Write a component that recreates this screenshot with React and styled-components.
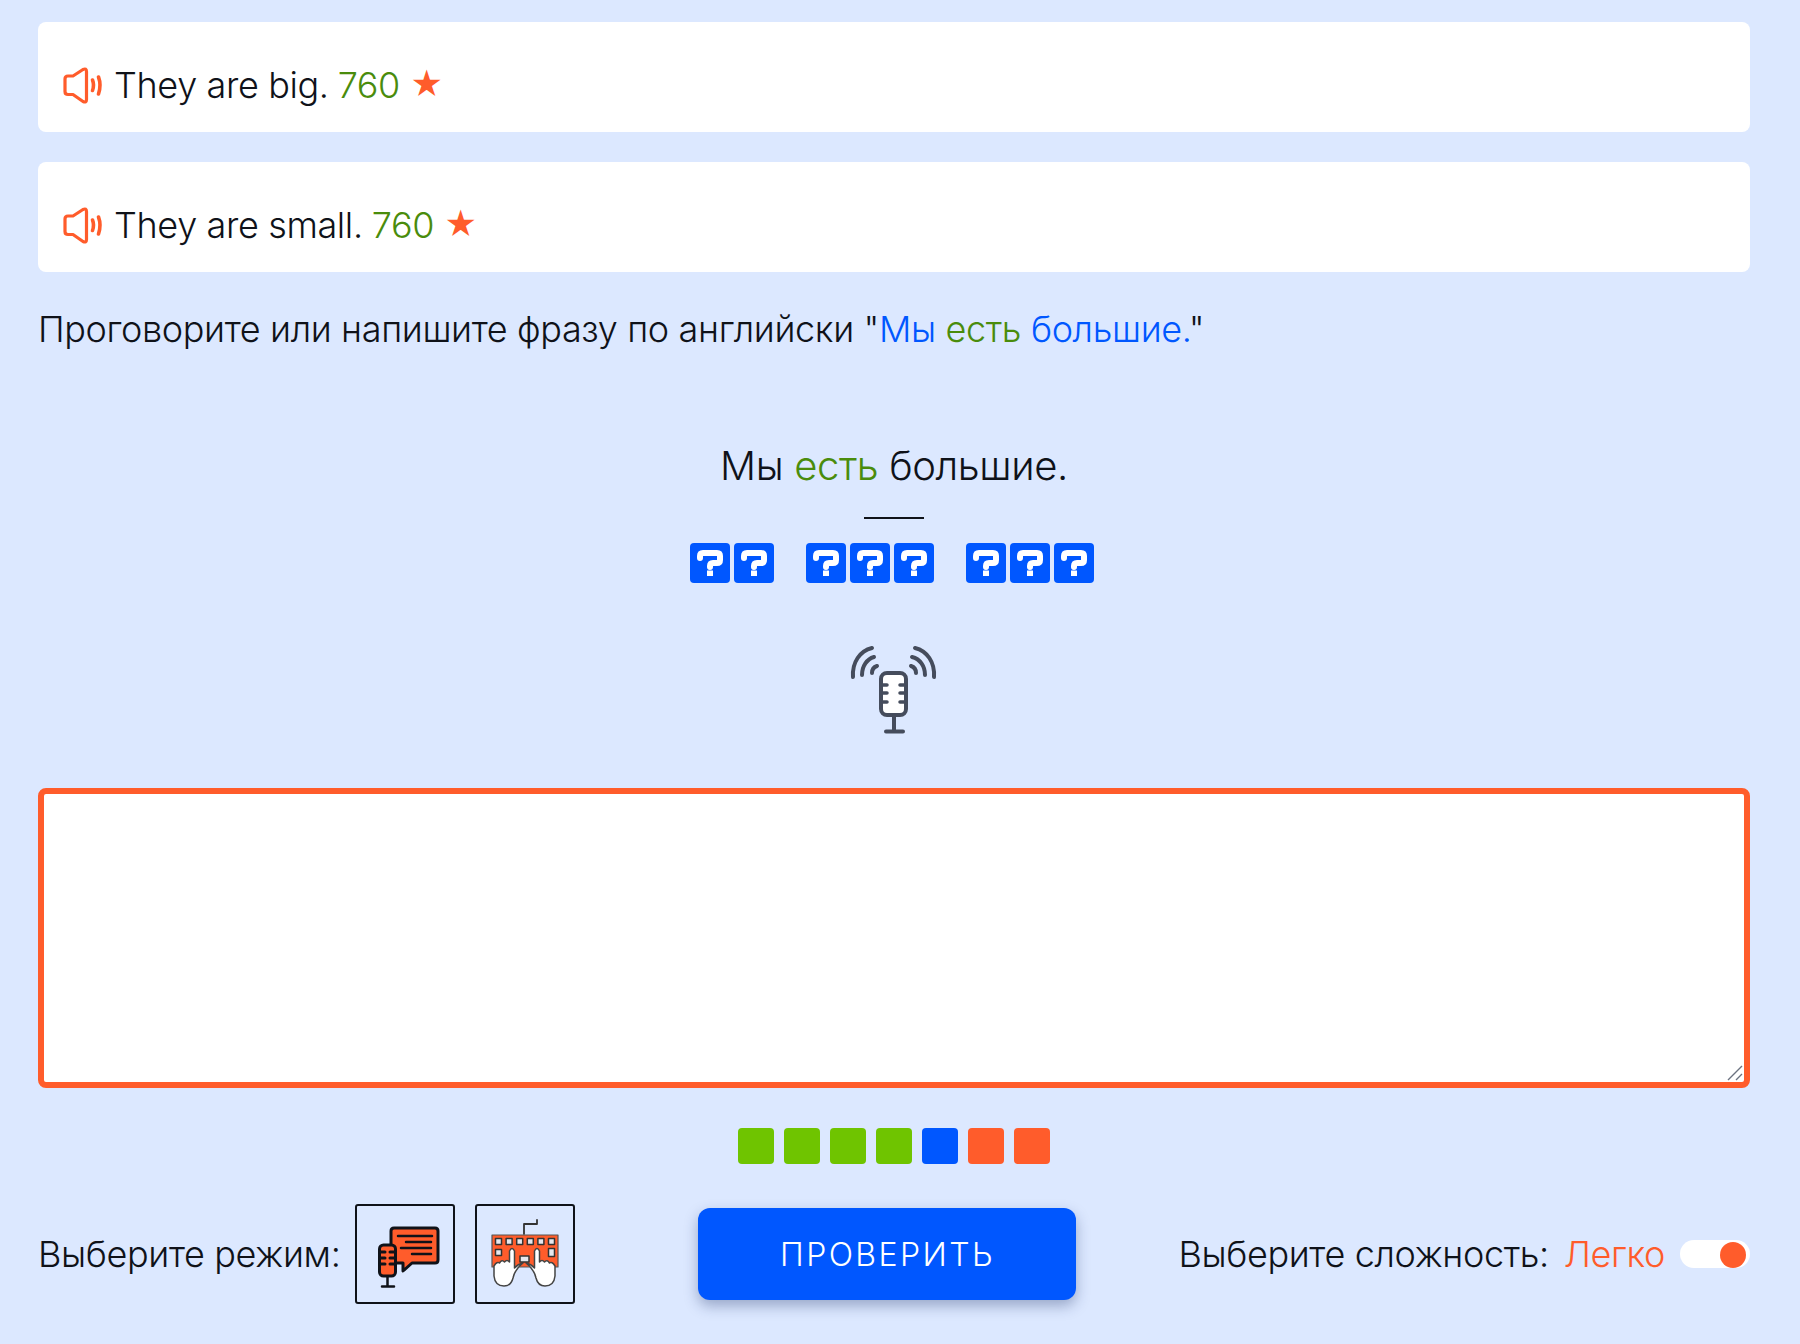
import React from 'react'
import styled, { createGlobalStyle } from 'styled-components'

const ORANGE = '#ff5c2b'
const BLUE = '#0057ff'
const GREEN = '#4a8c0c'
const LIME = '#6fc400'
const DARK = '#0f1219'

const GlobalStyle = createGlobalStyle`
  html, body {
    margin: 0;
    padding: 0;
    background: #dce8ff;
  }
  body {
    font-family: Inter, "Noto Sans", sans-serif;
    font-weight: 350;
    letter-spacing: -0.37px;
    color: ${DARK};
  }
`

const Page = styled.div`
  box-sizing: border-box;
  width: 1800px;
  height: 1344px;
  padding: 22px 50px 0 38px;
  overflow: hidden;
`

const Card = styled.div`
  box-sizing: border-box;
  height: 110px;
  margin-bottom: 30px;
  padding: 42px 0 0 25px;
  background: #fff;
  border-radius: 8px;
  display: flex;
  align-items: flex-start;
  font-size: 36px;
  line-height: 42px;
`

const SpeakerIcon = styled.svg`
  width: 42px;
  height: 44px;
  margin-right: 9px;
  flex: none;
`

const Score = styled.span`
  color: ${GREEN};
  margin-left: 9px;
`

const Star = styled.span`
  color: ${ORANGE};
  margin-left: 10px;
  font-size: 32px;
`

const Instruction = styled.div`
  padding-top: 5px;
  font-size: 36px;
  line-height: 44px;
`

const Blue = styled.span`
  color: ${BLUE};
`

const Green = styled.span`
  color: ${GREEN};
`

const Center = styled.div`
  display: flex;
  flex-direction: column;
  align-items: center;
`

const Phrase = styled.div`
  margin-top: 91px;
  font-size: 40px;
  line-height: 48px;
`

const Divider = styled.div`
  width: 60px;
  height: 2px;
  margin-top: 27px;
  background: ${DARK};
`

const Words = styled.div`
  display: flex;
  gap: 32px;
  margin: 24px 0 0 -4px;
`

const Word = styled.div`
  display: flex;
  gap: 4px;
`

const Letter = styled.svg`
  width: 40px;
  height: 40px;
  display: block;
`

const MicIcon = styled.svg`
  width: 90px;
  height: 90px;
  margin-top: 62px;
  display: block;
`

const AnswerBox = styled.div`
  position: relative;
  margin-top: 53px;
`

const Answer = styled.textarea`
  display: block;
  box-sizing: border-box;
  width: 100%;
  height: 300px;
  border: 6px solid ${ORANGE};
  border-radius: 8px;
  background: #fff;
  outline: none;
  resize: none;
`

const Grip = styled.svg`
  position: absolute;
  right: 7px;
  bottom: 7px;
  width: 16px;
  height: 16px;
`

const Progress = styled.div`
  display: flex;
  justify-content: center;
  gap: 10px;
  margin-top: 40px;
`

const Step = styled.div`
  width: 36px;
  height: 36px;
  border-radius: 4px;
  background: ${(p) => p.color};
`

const Footer = styled.div`
  display: flex;
  align-items: center;
  margin-top: 40px;
  height: 100px;
  font-size: 36px;
`

const ModeLabel = styled.span`
  margin-right: 15px;
`

const ModeButton = styled.div`
  box-sizing: border-box;
  width: 100px;
  height: 100px;
  margin-right: 20px;
  border: 2px solid ${DARK};
  border-radius: 3px;
  display: flex;
  align-items: center;
  justify-content: center;
`

const ModeIcon = styled.svg`
  width: 96px;
  height: 96px;
`

const CheckButton = styled.button`
  width: 378px;
  height: 92px;
  margin-left: 103px;
  border: none;
  border-radius: 12px;
  background: ${BLUE};
  color: #fff;
  font-family: inherit;
  font-size: 32px;
  font-weight: 350;
  letter-spacing: 2.4px;
  box-shadow: 0 6px 14px rgba(30, 50, 100, 0.35);
`

const Difficulty = styled.div`
  margin-left: auto;
  display: flex;
  align-items: center;
`

const Level = styled.span`
  color: ${ORANGE};
  margin-left: 15px;
`

const Toggle = styled.div`
  width: 70px;
  height: 28px;
  margin-left: 15px;
  padding: 2px 4px 0 0;
  box-sizing: border-box;
  border-radius: 14px;
  background: #fff;
  display: flex;
  justify-content: flex-end;
`

const Knob = styled.div`
  width: 26px;
  height: 26px;
  border-radius: 50%;
  background: ${ORANGE};
`

const Speaker = () => (
  <SpeakerIcon viewBox="0 0 42 44" fill="none" stroke={ORANGE} strokeLinecap="round" strokeLinejoin="round" strokeWidth="3.2">
    <path d="M2 15 Q2 12 5 12 H10 L20 5.5 Q23.5 4 23.5 7.5 V35.5 Q23.5 39 20 37.5 L10 30.5 H5 Q2 30.5 2 27.5 Z" />
    <path strokeWidth="3.6" d="M29.5 16 Q31.5 21 29.5 26.5" />
    <path strokeWidth="3.6" d="M35.5 13 Q38.5 21 35.5 30" />
  </SpeakerIcon>
)

const Question = () => (
  <Letter viewBox="0 0 40 40">
    <rect width="40" height="40" rx="4" fill={BLUE} />
    <path
      d="M10 15 V13 Q10 10 13 10 H27 Q30 10 30 13 V17 Q30 20 27 20 H23 Q20 20 20 23 V24"
      fill="none"
      stroke="#fff"
      strokeWidth="6"
      strokeLinecap="round"
      strokeLinejoin="round"
    />
    <rect x="17" y="27.5" width="6" height="5.5" fill="#fff" />
  </Letter>
)

const Mic = () => (
  <MicIcon viewBox="0 0 90 90" fill="none" stroke="#454c5c" strokeLinecap="round" strokeLinejoin="round" strokeWidth="4">
    <rect x="32" y="28" width="25" height="42" rx="6" fill="#fff" />
    <path strokeWidth="3.5" d="M34 40 H38 M34 48 H38 M34 57 H38 M51 40 H55 M51 48 H55 M51 57 H55" />
    <path d="M45 71 V86 M37 86.5 H54" />
    <path d="M4 32 C3 17 11 6 23 3" />
    <path d="M13 30 C13 21 18 14 25 12" />
    <path d="M23 28 C23 25 25 22 28 21" />
    <path d="M85 32 C86 17 78 6 66 3" />
    <path d="M76 30 C76 21 71 14 63 12" />
    <path d="M67 28 C67 25 65 22 62 21" />
  </MicIcon>
)

const SpeechMode = () => (
  <ModeIcon viewBox="0 0 96 96" fill="none" stroke={DARK} strokeLinejoin="round" strokeLinecap="round">
    <path strokeWidth="3" fill={ORANGE} d="M34 25 Q34 22 37 22 H78 Q81 22 81 25 V54 Q81 57 78 57 H55 L46 65 V57 H34 Z" />
    <path strokeWidth="2.5" d="M41 30 H75 M49 36 H74 M44 42 H74 M55 48 H74" />
    <rect x="22.5" y="39" width="16" height="31" rx="4" strokeWidth="3" fill={ORANGE} />
    <path strokeWidth="3" d="M23 46 H28 M23 52 H28 M23 58 H28 M33 46 H38 M33 52 H38 M33 58 H38" />
    <path strokeWidth="2.5" d="M30.5 71 V80 M25 80.5 H37" />
  </ModeIcon>
)

const keys = [0, 1, 2, 3, 4, 5]

const Hand = () => (
  <path
    fill="#fff"
    stroke="#444"
    strokeWidth="1.5"
    d="M46 57 Q41 58 37.5 62 V45 Q35 40 32.5 45 V56 Q30 53 27.5 56 Q25 53 22.5 57 Q20 55 17 60 V70 Q18 80 27 80 Q34 80 36 72 Q38 63 46 57 Z"
  />
)

const KeyboardMode = () => (
  <ModeIcon viewBox="0 0 96 96" fill="none" strokeLinejoin="round" strokeLinecap="round">
    <path stroke="#333" strokeWidth="1.8" d="M47 28 V18 H60 V14" />
    <rect x="15" y="29" width="66" height="32" fill={ORANGE} stroke="#555" strokeWidth="1.2" />
    {keys.map((k) => (
      <rect key={k} x={18.5 + k * 10.6} y="32.5" width="6" height="6" fill="#e6e8ee" stroke="#333" strokeWidth="1.5" />
    ))}
    <rect x="18.5" y="43.5" width="6" height="6" fill="#e6e8ee" stroke="#333" strokeWidth="1.5" />
    <rect x="71.5" y="42.5" width="6" height="8" fill="#e6e8ee" stroke="#333" strokeWidth="1.5" />
    <Hand />
    <g transform="translate(95 0) scale(-1 1)">
      <Hand />
    </g>
    <rect x="43" y="50" width="9" height="6" fill="#e6e8ee" stroke="#333" strokeWidth="1.5" />
  </ModeIcon>
)

const phrases = ['They are big.', 'They are small.']
const words = [2, 3, 3]
const steps = [LIME, LIME, LIME, LIME, BLUE, ORANGE, ORANGE]

export default function App() {
  return (
    <Page>
      <GlobalStyle />
      {phrases.map((text) => (
        <Card key={text}>
          <Speaker />
          <span>{text}</span>
          <Score>760</Score>
          <Star>★</Star>
        </Card>
      ))}
      <Instruction>
        Проговорите или напишите фразу по английски "<Blue>Мы </Blue><Green>есть</Green><Blue> большие.</Blue>"
      </Instruction>
      <Center>
        <Phrase>
          Мы <Green>есть</Green> большие.
        </Phrase>
        <Divider />
        <Words>
          {words.map((count, i) => (
            <Word key={i}>
              {Array.from({ length: count }, (_, j) => (
                <Question key={j} />
              ))}
            </Word>
          ))}
        </Words>
        <Mic />
      </Center>
      <AnswerBox>
        <Answer />
        <Grip viewBox="0 0 16 16" stroke="#6b7280" strokeWidth="1.4">
          <path d="M1 15 L15 1 M9 15 L15 9" />
        </Grip>
      </AnswerBox>
      <Progress>
        {steps.map((color, i) => (
          <Step key={i} color={color} />
        ))}
      </Progress>
      <Footer>
        <ModeLabel>Выберите режим:</ModeLabel>
        <ModeButton>
          <SpeechMode />
        </ModeButton>
        <ModeButton>
          <KeyboardMode />
        </ModeButton>
        <CheckButton>ПРОВЕРИТЬ</CheckButton>
        <Difficulty>
          <span>Выберите сложность:</span>
          <Level>Легко</Level>
          <Toggle>
            <Knob />
          </Toggle>
        </Difficulty>
      </Footer>
    </Page>
  )
}
